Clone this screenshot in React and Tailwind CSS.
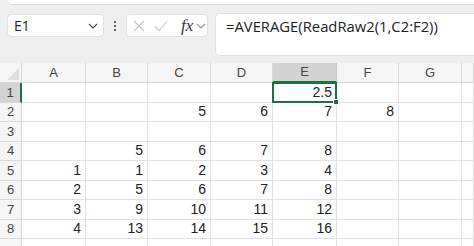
import React from "react";

const cols = ["A", "B", "C", "D", "E", "F", "G", ""];

const data = [
  ["", "", "", "", "2.5", "", "", ""],
  ["", "", "5", "6", "7", "8", "", ""],
  ["", "", "", "", "", "", "", ""],
  ["", "5", "6", "7", "8", "", "", ""],
  ["1", "1", "2", "3", "4", "", "", ""],
  ["2", "5", "6", "7", "8", "", "", ""],
  ["3", "9", "10", "11", "12", "", "", ""],
  ["4", "13", "14", "15", "16", "", "", ""],
  ["", "", "", "", "", "", "", ""],
];

const Chevron = ({ className }) => (
  <svg width="10" height="6" viewBox="0 0 10 6" className={className}>
    <path d="M1 1 L5 5 L9 1" fill="none" stroke="currentColor" strokeWidth="1.2" />
  </svg>
);

const App = () => {
  return (
    <div className="w-[474px] h-[246px] overflow-hidden bg-[#f0efef] font-['Liberation_Sans',Arial,sans-serif]">
      {/* Formula bar */}
      <div className="h-[63px] flex flex-col">
        <div className="h-[5px] ml-[7px] bg-white rounded-bl-[6px] border-b border-[#dcdcdc]" />
        <div className="flex items-start mt-[8px]">
          <div className="ml-[7px] mt-[1px] w-[97px] h-[23px] bg-white rounded-[4px] border border-[#e2e2e2] flex items-center justify-between pl-[6px] pr-[5px]">
            <span className="text-[14px] text-[#222] font-['Open_Sans',sans-serif]">E1</span>
            <Chevron className="text-[#444]" />
          </div>
          <div className="w-[22px] h-[23px] mt-[1px] flex flex-col items-center justify-center gap-[2px]">
            <span className="w-[2px] h-[2px] bg-[#333] rounded-full" />
            <span className="w-[2px] h-[2px] bg-[#333] rounded-full" />
            <span className="w-[2px] h-[2px] bg-[#333] rounded-full" />
          </div>
          <div className="mt-[1px] w-[82px] h-[23px] bg-white rounded-[4px] border border-[#e2e2e2] flex items-center pl-[6px]">
            <svg width="12" height="12" viewBox="0 0 12 12" className="text-[#c4c4c4]">
              <path d="M1 1 L11 11 M11 1 L1 11" stroke="currentColor" strokeWidth="1.1" />
            </svg>
            <svg width="14" height="12" viewBox="0 0 14 12" className="ml-[9px] text-[#c4c4c4]">
              <path d="M1 6.5 L5 10.5 L13 1.5" fill="none" stroke="currentColor" strokeWidth="1.1" />
            </svg>
            <span className="ml-[13px] text-[17px] italic text-[#333] font-['Liberation_Serif',serif] leading-none">fx</span>
            <Chevron className="ml-[3px] text-[#999]" />
          </div>
          <div className="ml-[7px] flex-1 h-[43px] bg-white rounded-l-[5px] border border-r-0 border-[#e2e2e2] pl-[10px] pt-[1px]">
            <span className="text-[14.8px] leading-[20px] text-[#222] font-['Open_Sans',sans-serif]">
              =AVERAGE(ReadRaw2(1,C2:F2))
            </span>
          </div>
        </div>
      </div>

      {/* Grid */}
      <div className="grid grid-cols-[22px_64px_62px_63px_62px_64px_62px_63px_1fr] grid-rows-[20px_repeat(9,19.5px)] bg-white text-[14px]">
        <div className="relative bg-[#f5f5f5] border-r border-b border-[#d8d8d8]">
          <svg width="12" height="12" viewBox="0 0 12 12" className="absolute right-[2px] bottom-[2px]">
            <path d="M12 0 L12 12 L0 12 Z" fill="#dedede" />
          </svg>
        </div>
        {cols.map((c, i) => (
          <div
            key={c + i}
            className={
              i === 4
                ? "bg-[#d3d3d3] border-r border-[#c8c8c8] border-b-2 border-b-[#1e7145] flex items-center justify-center text-[13px] text-[#444]"
                : "bg-[#f5f5f5] border-r border-b border-[#d8d8d8] flex items-center justify-center text-[13px] text-[#444]"
            }
          >
            {c}
          </div>
        ))}
        {data.map((row, r) => (
          <React.Fragment key={r}>
            <div
              className={
                r === 0
                  ? "bg-[#d3d3d3] border-r-2 border-r-[#1e7145] border-b border-[#d8d8d8] flex items-center justify-center text-[13px] text-[#444]"
                  : "bg-[#f5f5f5] border-r border-b border-[#d8d8d8] flex items-center justify-center text-[13px] text-[#444]"
              }
            >
              {r < 8 ? r + 1 : ""}
            </div>
            {row.map((v, c) => (
              <div
                key={c}
                className={
                  r === 0 && c === 4
                    ? "relative border-2 border-[#1e7145] -ml-px -mt-px flex items-center justify-end pr-[3px] text-[#222]"
                    : "border-r border-b border-[#e1e1e1] flex items-center justify-end pr-[4px] text-[#222]"
                }
              >
                {v}
                {r === 0 && c === 4 && (
                  <span className="absolute -right-[4px] -bottom-[4px] w-[6px] h-[6px] bg-[#1e7145] border border-white" />
                )}
              </div>
            ))}
          </React.Fragment>
        ))}
      </div>
    </div>
  );
};

export default App;
